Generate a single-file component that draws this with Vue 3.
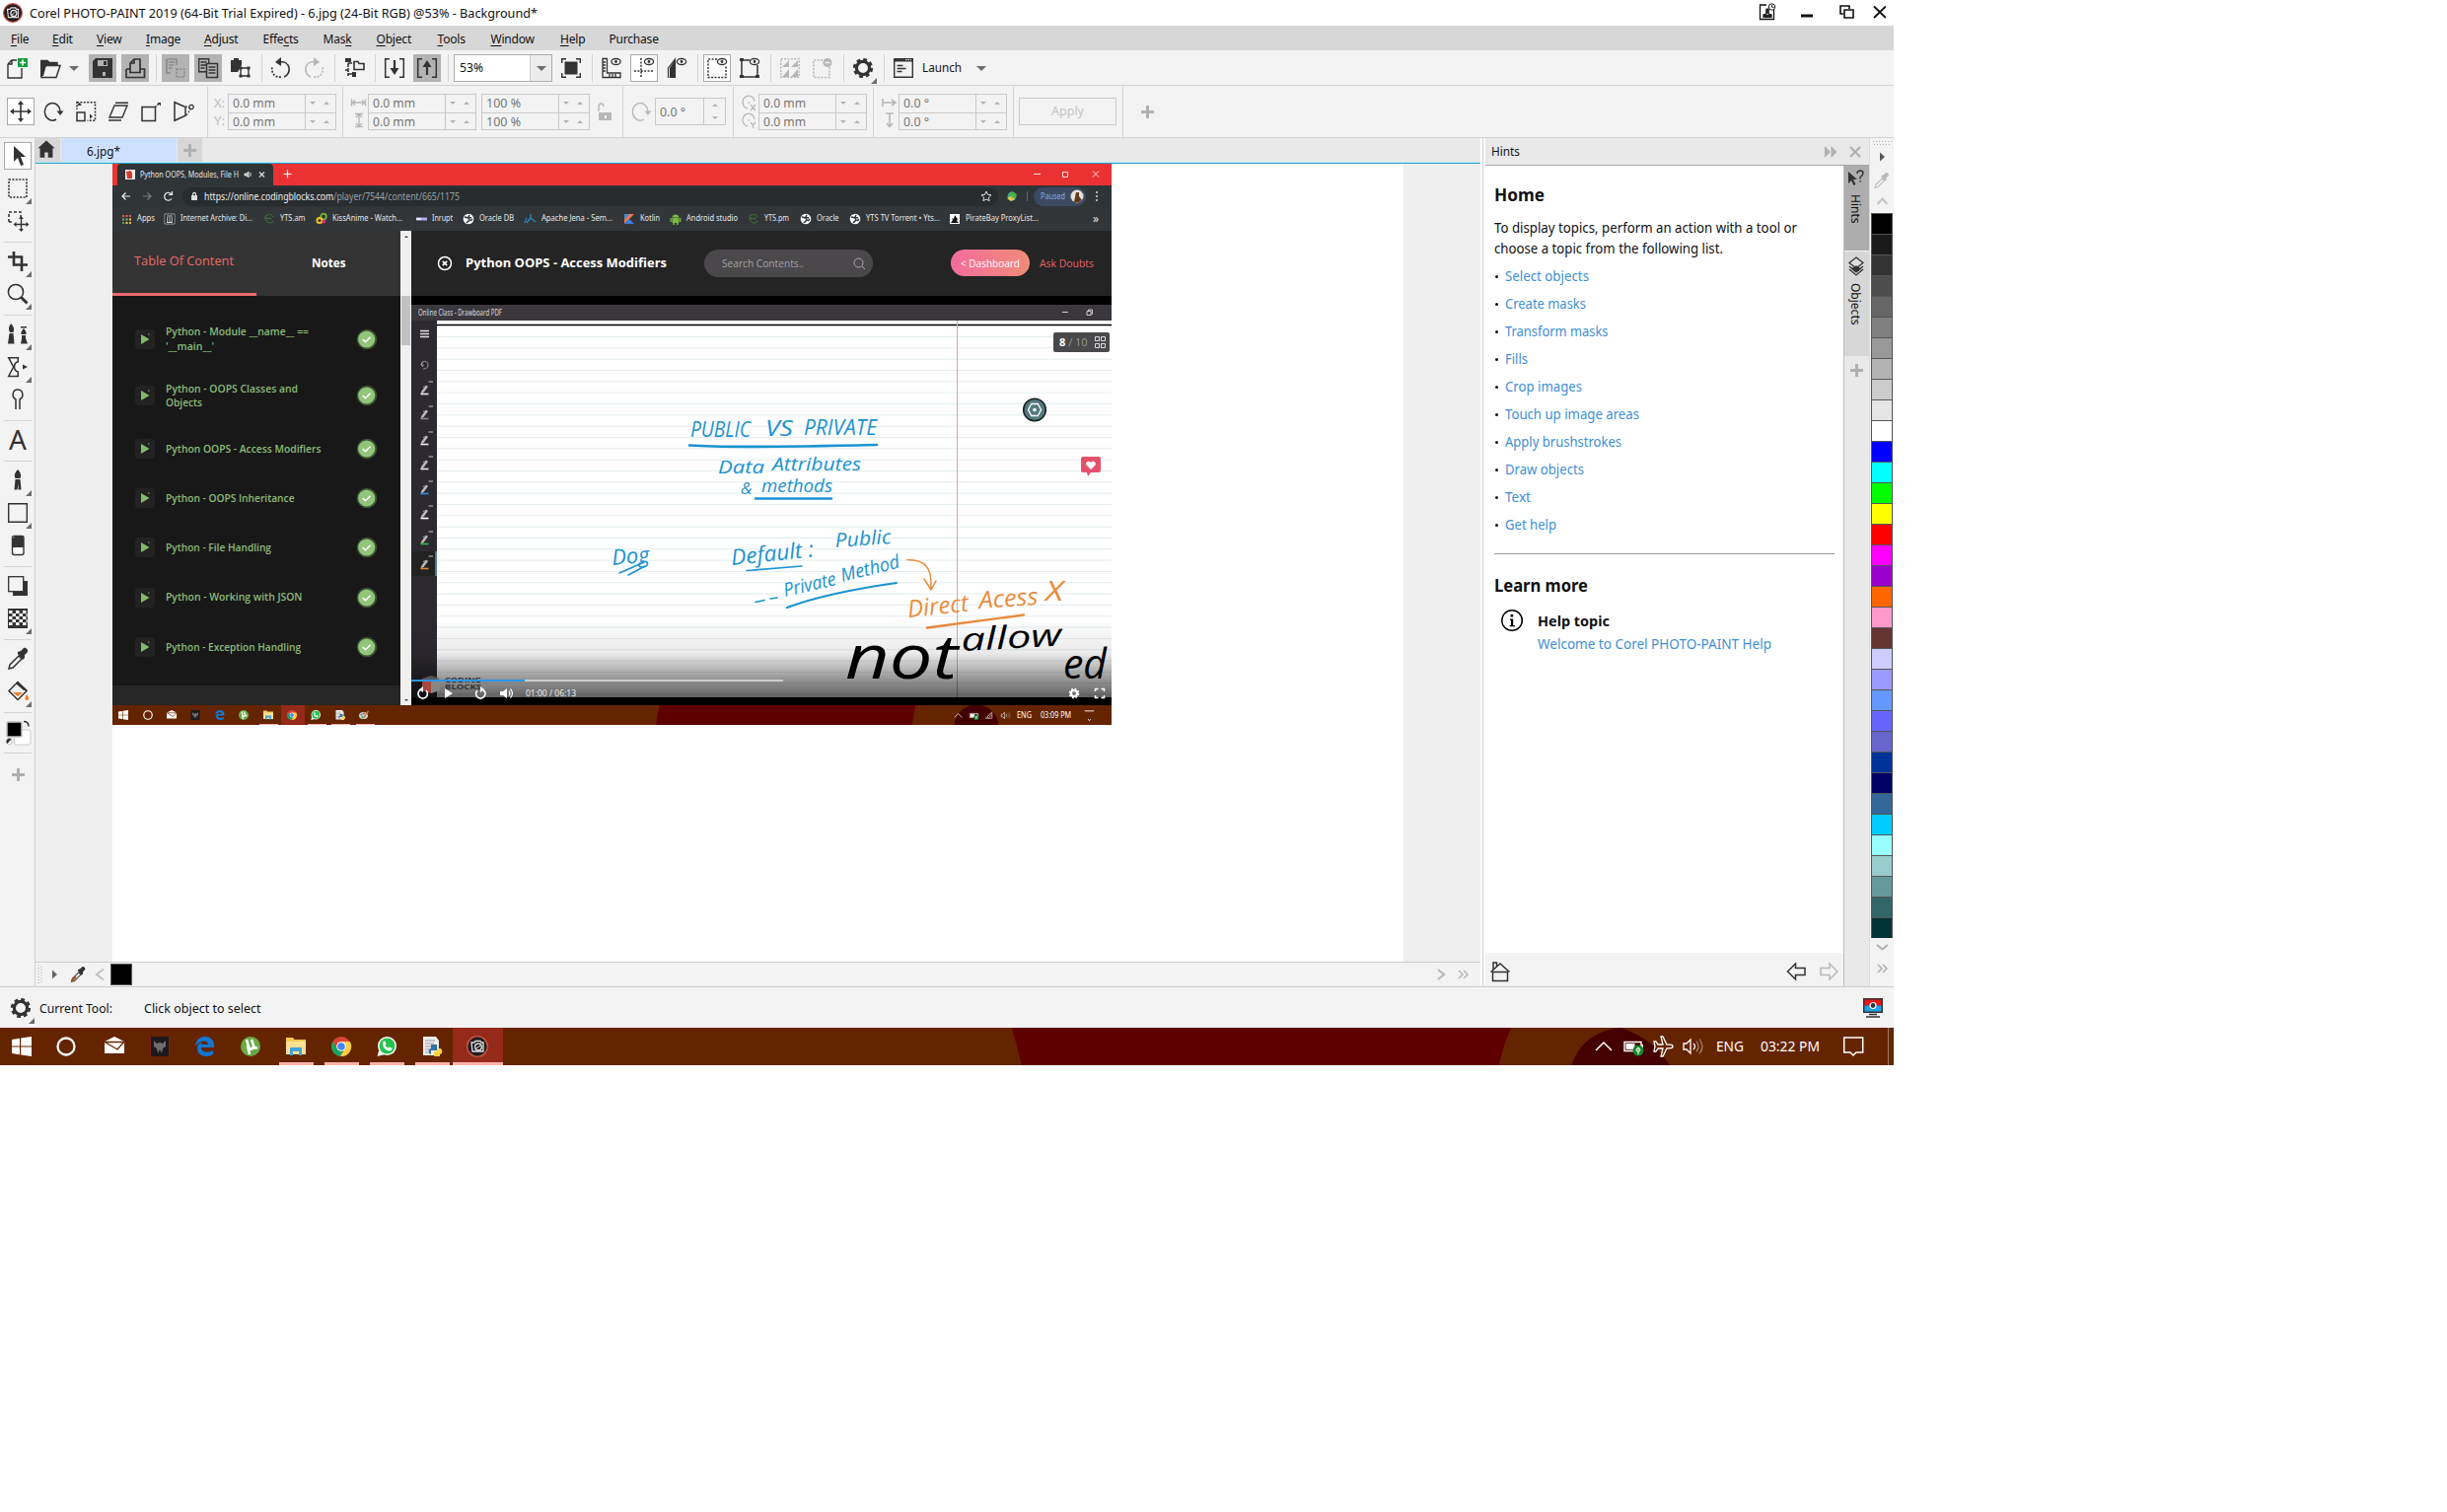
<script setup>
import { h } from 'vue'

// Single line of text set to an exact width
const T = (p) =>
  h('svg', { class: 'fit', style: { width: p.w + 'px' } }, [
    h('text', { x: 0, y: '1.05em', textLength: p.w, lengthAdjust: 'spacingAndGlyphs' }, p.t),
  ])
T.props = ['t', 'w']

const K = '#333'
const G = '#b8b8b8'
const s = (d, c = K, w = 1.4, x = '') => `<path d="${d}" fill="none" stroke="${c}" stroke-width="${w}" ${x}/>`
const f = (d, c = K) => `<path d="${d}" fill="${c}"/>`
const dot = 'stroke-dasharray="2 1.4"'
const eye = (x, y) => `<ellipse cx="${x}" cy="${y}" rx="4.6" ry="3" fill="#fff" stroke="#333" stroke-width="1.3"/><circle cx="${x}" cy="${y}" r="1.4" fill="#333"/>`
const tri = f('M28 24v6h-6z', '#6d6d6d')
const gear = (c = K) => `<circle cx="14" cy="14" r="6.6" fill="none" stroke="${c}" stroke-width="3.2"/><circle cx="14" cy="14" r="8.8" fill="none" stroke="${c}" stroke-width="2.6" stroke-dasharray="3.8 3.11"/>`
const dropper = (c, tip) => s('M5 24l1-4 9-9 3 3-9 9z', c, 1.5) + f('M14 9l5 6 2-2 0-3 3-3c1-2-2-5-4-4l-3 3-3 1z', c) + (tip ? f('M5 24l1-4 4-4 2 2-4 5z', tip) : '')
const icons = {
  new: s('M4 10v14h14V14M4 10l4-4h5M4 10h4V6', K, 1.4) + f('M14 4h10v9H14z', '#159a3c') + s('M19 5.5v6M16 8.5h6', '#fff', 1.5),
  open: f('M4 6h7l2 2h8v3H10L7 22H4z') + s('M4.7 22.5L9 11.5h15l-4 12H5z', K, 1.5) + s('M4.7 23V6.5H11l2 2h8v3', K, 1.4),
  save: f('M7 4h17v20H4V7z') + f('M9 6h10v6H9z', '#b3b3b3') + f('M15 7h3v4h-3z') + f('M14 18h3v4h-3z', '#b3b3b3'),
  print: s('M9 18V9l4-4h6v13M9 9h4V5M5 15v8.5h18.5V15h-4M5 15h4M8 18.5h12', K, 1.7),
  cut: s('M5 5h10v6M5 5v14h4M7 8h6M7 11h5M7 14h3', '#8b8b8b', 1.7) + s('M15 15h8v8h-8z', '#8b8b8b', 1.6, dot),
  copy: s('M4.7 4.7h10v13h-10zM6.5 8h6M6.5 11h6M6.5 14h4', K, 1.4) + '<rect x="12.5" y="9.5" width="11" height="14" fill="#b3b3b3" stroke="#333" stroke-width="1.5"/>' + s('M14.5 13h7M14.5 16h7M14.5 19h7', K, 1.4),
  paste: f('M4 6h3V4h5v2h3v5l-4 7H4z') + s('M14 14h8v8h-8z', K, 1.4) + f('M12.5 12.5h3v3h-3zM20.5 12.5h3v3h-3zM12.5 20.5h3v3h-3zM20.5 20.5h3v3h-3z'),
  undo: s('M12 8c12-2 13 12 5 15', K, 1.6) + s('M14 23C6 24 4 17 5 13', K, 1.6, dot) + f('M8 8l6-5v9z'),
  redo: s('M16 8C4 6 3 20 11 23', G, 1.6) + s('M14 23c8 1 10-6 9-10', G, 1.6, dot) + f('M20 8l-6-5v9z', G),
  tree: s('M8 4v18M8 9h6M8 20h5', K, 1.6, 'stroke-dasharray="4 1"') + s('M14 7.5h4l1 2h5v6H14z', K, 1.6) + f('M5 4h6v4H5zM12 18h4v5h-4z') + s('M5 16h3', K, 1.6),
  imp: s('M9 4.7H4.7v18.6H9M19 4.7h4.3v18.6H19', K, 1.5) + s('M14 6v10', K, 2.2) + f('M9.5 14h9L14 21z'),
  exp: s('M9 4.7H4.7v18.6H9M19 4.7h4.3v18.6H19', K, 1.5) + s('M14 11v10', K, 2.2) + f('M9.5 13h9L14 6z'),
  full: f('M7.5 7.5h13v13h-13z') + s('M4.7 9V4.7H9M19 4.7h4.3V9M23.3 19v4.3H19M9 23.3H4.7V19', K, 1.4),
  ruler: s('M5 4.5h4.5V19H23v4.5H5zM5 8h3M5 11h3M5 14h3M5 17h3M12 20v3M15 20v3M18 20v3', K, 1.3) + eye(18.5, 7.5),
  grid: s('M11 4v20M4 17h20', K, 1.5, dot) + eye(19, 7.5),
  guide: f('M7 24V14l5-8v18z') + s('M5.5 24V14l7-9v19', K, 1.2) + eye(19, 7.5),
  marq: s('M14 5H5v18.5h18V12', K, 1.5, dot) + eye(19, 7.5),
  objm: s('M14 6H6v17h16V11', K, 1.5) + f('M4 4h4v3H4zM4 21h4v3H4zM20 21h4v3h-4z') + eye(19, 7.5),
  inv: s('M4.7 4.7h18.6v18.6H4.7z', G, 1.5, dot) + f('M13 6v7H6zM22 6v7h-7zM13 15v8H6zM22 15v8h-7z', G),
  clr: s('M14 6H5v17.5h16V13', G, 1.5, dot) + `<circle cx="19" cy="8.5" r="4.5" fill="${G}"/>` + s('M16.5 8.5h5', '#f3f3f3', 1.4),
  gear: gear() + tri,
  launch: s('M4.7 4.7h18.6v18.6H4.7z', K, 1.4) + f('M4 4h20v3.5H4z') + s('M16 5.7h6', '#fff', 1, 'stroke-dasharray="1.5 1"') + s('M7.5 11.5h6M7.5 14.5h9M7.5 17.5h5', K, 1.3),
  move: s('M14 5v18M5 14h18', K, 1.6) + f('M14 3l3 4h-6zM14 25l3-4h-6zM3 14l4-3v6zM25 14l-4-3v6z'),
  rot: s('M21 14A7.8 8.8 0 1 0 17 22', K, 1.5) + f('M17.5 13.5h7L21 18z'),
  scale: s('M5 4.7h18.5v18.6h-8', K, 1.5, dot) + s('M5 4v8', K, 1.5, dot) + s('M5 15h8v8.5H5z', K, 1.5) + f('M5 8h5L7.5 5zM18 16.5v5l3-2.5z'),
  skew: s('M10 8h13l-5 12H5zM11 5.3h13M4 23h13', K, 1.4),
  dist: s('M5 9.5h13.5v14H5z', K, 1.5) + s('M18 10l4-4', K, 1.5, dot) + f('M20.5 5h3.5v3.5z'),
  persp: s('M5 4.7v18.6l11-5V9.5z', K, 1.5) + s('M16 9l6 2M17 18l4-6', K, 1.2, dot) + '<circle cx="22" cy="9.5" r="2.2" fill="none" stroke="#333" stroke-width="1.2"/>',
  pick: f('M10 4v16l4-4 3 8 3-1-3-8h5z'),
  mask: s('M5 5h18v18H5z', K, 1.6, dot) + tri,
  mmove: s('M5 15V5h12v5M5 15h4', K, 1.6, 'stroke-dasharray="3 2"') + s('M17.5 12v11M12 17.5h11', K, 1.4) + f('M17.5 9l2.5 3h-5zM17.5 25l2.5-3h-5zM9.5 17.5l3-2.5v5zM25.5 17.5l-3-2.5v5z'),
  crop: s('M10 4v13.5h14M4 9.5h14V24', K, 2.6) + tri,
  zoom: '<circle cx="12" cy="12" r="7.6" fill="none" stroke="#333" stroke-width="1.5"/>' + s('M17.5 17.5l6 6', K, 3) + tri,
  touch: f('M7 3c3 3 4 6 2.5 9H6C4 9 5 6 7 3zM5.5 13h4l1 10.5H4zM17 6h6v1.5h-6zM20 8c2 2 3 4 2.5 6h-5C17 12 18 10 20 8zM18 15h4v3l2 5.5h-7l1-5z') + tri,
  fx: s('M4.7 4.7h9.6v4c-5 1-5 9 0 10.3v4.5H4.7l5-9.5z', K, 1.5) + f('M19 11.5l5 2.5-5 2.5z') + tri,
  liq: s('M12 24V14c-5-3-3-10 2-10s7 7 2 10v10', K, 1.5),
  brush: f('M14 3c3 3 4 6 2.5 9h-5C10 9 11 6 14 3zM11.5 13h5l1 10.5h-3v-6l-1 6h-3z') + tri,
  rect: s('M4.7 4.7h18.6v18.6H4.7z', K, 1.4) + tri,
  erase: '<rect x="8.5" y="4.5" width="11.5" height="19" rx="2" fill="#fff" stroke="#333" stroke-width="1.4"/>' + f('M8 16V8l4-4h8v12z'),
  shad: f('M9 9h15v15H9z') + '<rect x="4.7" y="4.7" width="15" height="15" fill="#f3f3f3" stroke="#333" stroke-width="1.3"/>',
  check: f('M4 4h20v20H4z') + s('M5 7.5h18M5 13.5h18M5 19.5h18', '#fff', 2.8, 'stroke-dasharray="3.5 3.5"') + s('M8.5 10.5h15M8.5 16.5h15', '#fff', 2.8, 'stroke-dasharray="3.5 3.5"') + tri,
  drop: dropper(K),
  bucket: s('M5 13.5l9-9 9 9-9 9z', K, 1.5) + f('M14 4l10 9h-4l-8-7z') + f('M9 15h10l-5 4z', '#f47b20') + f('M23 17c3 4 2 6 0 6s-2-3 0-6z', '#f47b20') + tri,
  cols: '<rect x="10.5" y="12" width="16.5" height="15" rx="2" fill="#fff" stroke="#ccc"/><rect x="3" y="4" width="15" height="15" rx="1" fill="#000" stroke="#c4c4c4" stroke-width="1.5"/>' + s('M20 3.5c4 0 5 2 5 5', K, 1.5) + '<circle cx="5.5" cy="24" r="2.8" fill="#fff" stroke="#999" stroke-width=".6"/>' + f('M3.5 26l4-4.5a2.8 2.8 0 0 0-4 4.5z'),
  lock: s('M8 14V9c0-4 5-4 5 0', G, 1.5) + f('M8 15h13v8H8z', G) + f('M14 18h2v3h-2z', '#f3f3f3'),
  rotg: s('M21 14A7.8 8.8 0 1 0 17 22', G, 1.4) + f('M17.5 13.5h7L21 18z', G),
  home: f('M14 3l10 9h-2.5v11h-5.500v-6h-4v6H6.500V12H4z'),
  win: f('M4 7l8-1.2V13.4H4zM13.2 5.6L24 4v9.4H13.2zM4 14.6h8v7.6L4 21zM13.2 14.6H24V24l-10.8-1.6z', '#fff'),
  ring: '<ellipse cx="14" cy="14" rx="8.5" ry="8.5" fill="none" stroke="#fff" stroke-width="2.3"/>',
  mail: f('M4 9l10-5 10 5v12H4z', '#fff') + s('M4 9.5h20M5 10l12 7 7-8', '#652400', 1.3),
  pred: f('M4 4h20v20H4z', '#1d1a1b') + s('M4.5 4v20M23.5 4v20', '#7d1d24', 1) + f('M8 8l3 3 3-1 3 1 3-3v6l-3 2-1 5-2-4-2 4-1-5-3-2z', '#6d6d6d'),
  edge: f('M4 14C5 6 10 4 14 4c6 0 9 4 9 9v2H10c0 5 7 6 12 3v4c-6 4-16 2-16-6 0-4 3-6 5-6.5-1 1-1 2-1 2.5h7c0-5-8-5-13 2z', '#0f78d4'),
  ut: '<circle cx="14" cy="14" r="10" fill="#68ab45"/>' + s('M10 7l2 7c1 4 5 3 5-1l-2-6M17 13c1 3 2 3 4 2M11 13l2 9', '#fff', 2.6),
  folder: f('M4 5h7l1.5 2H24v15H4z', '#f5ca56') + f('M4 9h20v13H4z', '#fde192') + f('M8 23v-8h12v8h-3v-4h-6v4z', '#41a5d8'),
  chrome: '<circle cx="14" cy="14" r="10" fill="#dc4437"/>' + f('M5.3 9A10 10 0 0 0 13 24l5-8-4 2-4-2z', '#1aa260') + f('M14 9h8.8A10 10 0 0 1 13 24l5-8z', '#ffcd41') + '<circle cx="14" cy="14" r="4.8" fill="#fff"/><circle cx="14" cy="14" r="3.8" fill="#4587f2"/>',
  wa: '<circle cx="14.5" cy="13.5" r="9.5" fill="#fff"/>' + f('M4.5 24l2-7 6 5z', '#fff') + '<circle cx="14.5" cy="13.5" r="8" fill="#25c351"/>' + f('M10.5 9l2-.5 1 3-1 1c1 2 2 2.5 3 3l1.2-1 2.8 1.2c0 3-3 3.5-5.5 2C11 16 9 12 10.5 9z', '#fff'),
  py: f('M5 4h13l3 4v15H5z', '#eee') + s('M7 8h10M7 11h9M7 14h6M7 17h5M7 20h4', '#999', 1) + f('M13 12h6v6h-6v4c-3 0-3-6 0-6z', '#3672a4') + f('M19 16h3c3 0 3 6 0 6v2h-6v-5h3z', '#ffd243'),
  corel: '<circle cx="14" cy="14" r="10.3" fill="#201c20" stroke="#cf5a43" stroke-width="1.3"/>' + s('M8 10h3l1-1.5h5l1 1.5h2v9H9z', '#ddd', 1.3) + '<circle cx="15" cy="14.5" r="3.3" fill="#201c20" stroke="#eee" stroke-width="1.3"/>' + s('M13 16l4-3', '#eee', 1),
  paint: '<ellipse cx="13" cy="15" rx="9" ry="7" fill="#cfd6dc"/><circle cx="9" cy="13" r="2" fill="#3b82c4"/><circle cx="14" cy="11" r="2" fill="#d94b3d"/><circle cx="11" cy="18" r="2" fill="#4ba64b"/>' + s('M13 20L23 6', '#b7834f', 2.6),
  tUp: s('M6 18l8-8 8 8', '#fff', 1.5),
  tBat: s('M5 9.5h17v9H5z', '#fff', 1.4) + f('M6.5 11h9v6h-9zM22 12h2v4h-2z', '#fff') + '<circle cx="19" cy="18" r="5.5" fill="#14882c"/>' + s('M19 22v-6M17 17c0 3 4 3 4 0l-2-2z', '#fff', 1),
  tPlane: s('M24 14c0-1.5-1-1.8-3-1.8h-3L14 4h-2l2 8H9l-2-3H5l1 5-1 5h2l2-3h5l-2 8h2l4-8.2h3c2 0 3-.3 3-1.8z', '#fff', 1.3),
  tVol: s('M5 11h3l4-4v14l-4-4H5z', '#fff', 1.3) + s('M15 11c2 2 2 4 0 6', '#fff', 1.2) + s('M18 8.5c3 4 3 7 0 11M21 6.5c4 5 4 10 0 15', '#a58672', 1.2),
  tNote: s('M4.7 5h19v15H17l-3 3-3-3H4.7z', '#fff', 1.5),
  tWifi: s('M5 20L19 6v14zM9 20c0-6 5-9 9-10M13 20c0-4 3-6 6-6', '#d8c8be', 1.5),
}

const menus = [
  ['F', 'ile', 18.5, 42], ['E', 'dit', 22, 45], ['V', 'iew', 27, 50], ['I', 'mage', 36, 59], ['A', 'djust', 36, 59.5], ['Effe', 'ts', 38, 61, 'c'],
  ['Mas', '', 31, 54, 'k'], ['O', 'bject', 38, 62], ['T', 'ools', 31, 54], ['W', 'indow', 47, 70.5], ['H', 'elp', 27, 49.5], ['Purchase', '', 52, 60, ''],
]
const bar1a = [
  ['new'], ['open'], ['|v'], ['save', 'on'], ['print', 'on'], ['|'], ['cut', 'on'], ['copy', 'on'], ['paste'], ['|'], ['undo'], ['redo'], ['|'],
  ['tree'], ['|'], ['imp'], ['exp', 'on'], ['|'],
]
const bar1b = [
  ['full'], ['|'], ['ruler'], ['grid', 'box'], ['guide'], ['|'], ['marq', 'box'], ['objm'], ['|'], ['inv'], ['clr'], ['|'], ['gear'], ['|'], ['launch'],
]
const modes = [['move', 'box'], ['rot'], ['scale'], ['skew'], ['dist'], ['persp']]
const tools = [
  ['pick', 'box'], ['mask'], ['mmove'], ['-'], ['crop'], ['zoom'], ['-'], ['touch'], ['fx'], ['liq'], ['-'], ['A'], ['-'], ['brush'], ['rect'], ['erase'],
  ['-'], ['shad'], ['check'], ['-'], ['drop'], ['bucket'], ['-'], ['cols'], ['-'], ['+'],
]
const palette = (
  '000 1a1a1a 333 4d4d4d 666 808080 999 b3b3b3 ccc e6e6e6 fff 00f 0ff 0f0 ff0 f00 f0f 9900cc f60 f9c 633 ccf 99f 69f 66f 66c 039 006 369 0cf 9ff 9cc 699 366 033'
).split(' ').map((c) => '#' + c)
const hints = [
  ['Select objects', 85], ['Create masks', 82], ['Transform masks', 104.5], ['Fills', 23], ['Crop images', 78], ['Touch up image areas', 136],
  ['Apply brushstrokes', 118], ['Draw objects', 80], ['Text', 26], ['Get help', 52],
]
const tasks = [
  ['win', 45], ['ring', 45], ['mail', 52], ['pred', 41], ['edge', 51], ['ut', 41], ['folder', 51, 'u'], ['chrome', 41, 'u'], ['wa', 51, 'u'], ['py', 41, 'u'], ['corel', 51, 'act'],
]
const lessons = [
  [['Python - Module __name__ ==', 145], ["'__main__'", 49]],
  [['Python - OOPS Classes and', 134], ['Objects', 37]],
  [['Python OOPS - Access Modifiers', 157.5]],
  [['Python - OOPS Inheritance', 130.5]],
  [['Python - File Handling', 107]],
  [['Python - Working with JSON', 138.5]],
  [['Python - Exception Handling', 137]],
]
const globe = '<circle cx="7" cy="7" r="5.3" fill="#fff"/><path d="M3 5l4 1 1 2-3 3M8 3l-1 2 3 1M9 9l2-2" fill="none" stroke="#2f3437" stroke-width="1.5"/>'
const yts = '<path d="M3 4c-1 7 6 9 8 5M3 4c3-2 7-2 8 1" fill="none" stroke="#3f7c35" stroke-width="1"/><path d="M4 6.5h6" stroke="#3f7c35" stroke-width="1.5" stroke-dasharray="2 1"/>'
const marks = [
  ['Apps', 18, 44, '<path d="M3 4h9M3 7.5h9M3 11h9" stroke="#e0604c" stroke-width="2" stroke-dasharray="2 1.5"/><path d="M3 7.5h5.5M3 11h2" stroke="#58a55c" stroke-width="2" stroke-dasharray="2 1.5"/><path d="M6.5 11h6M10 7.5h2" stroke="#e6b93c" stroke-width="2" stroke-dasharray="2 1.5"/>'],
  ['Internet Archive: Di...', 73, 101, '<path d="M2 2h10v10H2z" fill="#111" stroke="#bbb" stroke-width=".8"/><path d="M4 4h6M4 10.5h6M4.7 5v5M7 5v5M9.3 5v5" stroke="#ddd"/>'],
  ['YTS.am', 25.5, 53, yts],
  ['KissAnime - Watch...', 71, 101, '<circle cx="9" cy="4.5" r="2.8" fill="none" stroke="#6dbb2f" stroke-width="1.8"/><circle cx="5" cy="8.5" r="2.6" fill="none" stroke="#f0c419" stroke-width="2"/><circle cx="9.5" cy="9.5" r="2" fill="#e0218a"/>'],
  ['Inrupt', 21, 48, '<path d="M2 7h11" stroke="#b9a6f0" stroke-width="3"/><path d="M2 7h5" stroke="#e7ecff" stroke-width="2"/>'],
  ['Oracle DB', 35, 63, globe],
  ['Apache Jena - Sem...', 72, 100, '<path d="M7 2v4l-4 5M7 6l5 4M3 6l-2 5" fill="none" stroke="#2687b8" stroke-width="1.3"/>'],
  ['Kotlin', 20, 47, '<path d="M2 2h5l-5 6z" fill="#3d8fe0"/><path d="M7 2h5L2 12V8z" fill="#ec7b4e"/><path d="M2 12l5-5 5 5z" fill="#3f7fe0"/>'],
  ['Android studio', 52, 79, '<path d="M3.5 6h7v5h-7zM3.5 5.5c0-4 7-4 7 0zM1.5 6h1.3v4H1.5zM11.2 6h1.3v4h-1.3zM4.5 11h1.5v2H4.5zM8 11h1.5v2H8z" fill="#79b83f"/>'],
  ['YTS.pm', 25, 53, yts],
  ['Oracle', 22.5, 50, globe],
  ['YTS TV Torrent • Yts...', 75, 101, globe],
  ['PirateBay ProxyList...', 74, 143, '<path d="M2 2h10v10H2z" fill="#fff"/><path d="M3 11l2-3-1-2 2 1 1-4 2 3 1 1-1 2 2 2z" fill="#111"/>'],
]
const minis = [['win', ''], ['ring', ''], ['mail', ''], ['pred', ''], ['edge', ''], ['ut', ''], ['folder', 'u'], ['chrome', 'act'], ['wa', 'u'], ['py', 'u'], ['paint', 'u']]
const pens = ['#eee', '#888', '#eee', '#eee', '#2a8fe0', '#fff', '#3cb34a', '#e2862f']
const rules = Array.from({ length: 33 }, (_, i) => 341.5 + i * 11.33)
</script>

<template>
  <div class="app">
    <header class="title">
      <svg class="logo" viewBox="2 2 24 24" v-html="icons.corel" />
      <T t="Corel PHOTO-PAINT 2019 (64-Bit Trial Expired) - 6.jpg (24-Bit RGB) @53% - Background*" :w="515" />
      <svg class="winctl" width="136" height="26" fill="none" stroke="#111">
        <path d="M15 5H8.500v14.500h14V10M12 17h8v-2l-3-1v-4h-2v4l-3 1z" stroke-width="1.300" />
        <path d="M14.500 8.500h3v5h-3zM12 15h8v3h-8z" fill="#222" stroke="none" />
        <circle cx="20.500" cy="7" r="3.200" fill="#fff" stroke-width="1" /><path d="M20.500 5v2.300h2" stroke-width=".9" />
        <path d="M50 16h12" stroke-width="3" />
        <path d="M93 14h-3V6h9v3M94 10h9v8h-9z" stroke-width="1.600" />
        <path d="M124 6.500l12 11.500M136 6.500l-12 11.500" stroke-width="1.900" />
      </svg>
    </header>

    <nav class="menu">
      <span v-for="m in menus" :key="m[0]" class="menu-item" :style="{ width: m[3] + 'px' }"
        ><span v-if="m.length > 4">{{ m[0] }}<u>{{ m[4] }}</u>{{ m[1] }}</span><span v-else><u>{{ m[0] }}</u>{{ m[1] }}</span></span>
    </nav>

    <div class="bar1">
      <template v-for="(b, i) in bar1a" :key="i">
        <i v-if="b[0] === '|'" class="sep" />
        <i v-else-if="b[0] === '|v'" class="drop"><b class="down" /></i>
        <span v-else class="cell" :class="b[1]"><svg viewBox="0 0 28 28" v-html="icons[b[0]]" /></span>
      </template>
      <div class="combo"><T t="53%" :w="24" /><i><b class="down" /></i></div>
      <template v-for="(b, i) in bar1b" :key="'b' + i">
        <i v-if="b[0] === '|'" class="sep" />
        <span v-else class="cell" :class="b[1]"><svg viewBox="0 0 28 28" v-html="icons[b[0]]" /></span>
      </template>
      <T class="launch" t="Launch" :w="40" /><b class="down" />
    </div>

    <div class="bar2">
      <span v-for="b in modes" :key="b[0]" class="cell" :class="b[1]"><svg viewBox="0 0 28 28" v-html="icons[b[0]]" /></span>
      <i class="sep s14" />
      <div class="lab"><T t="X:" :w="11" /><T t="Y:" :w="11" /></div>
      <div class="spin"><div v-for="n in 2" :key="n"><T t="0.0 mm" :w="43" /><i><b class="dn" /><b class="up" /></i></div></div>
      <i class="sep s13" />
      <svg class="g" width="19" height="36" fill="none" stroke="#b8b8b8" stroke-width="1.400"><path d="M2.500 5.500v7M16.500 5.500v7M3 9h13M6 6.500L3.500 9 6 11.500M13 6.500L15.500 9 13 11.500M6 20.500h8M6 33.500h8M10 21v12M7 24l3-3 3 3M7 30l3 3 3-3" /></svg>
      <div class="spin"><div v-for="n in 2" :key="n"><T t="0.0 mm" :w="43" /><i><b class="dn" /><b class="up" /></i></div></div>
      <div class="spin second"><div v-for="n in 2" :key="n"><T t="100 %" :w="35" /><i><b class="dn" /><b class="up" /></i></div></div>
      <span class="mid"><svg viewBox="0 0 28 28" v-html="icons.lock" /></span>
      <i class="sep" />
      <span class="mid"><svg viewBox="0 0 28 28" v-html="icons.rotg" /></span>
      <div class="angle"><T t="0.0 °" :w="26" /><i><b class="up" /><b class="dn" /></i></div>
      <i class="sep s15" />
      <svg class="g" width="18" height="36" fill="none" stroke="#b8b8b8" stroke-width="1.300"><path d="M14 8A6 6.500 0 1 0 7 15M14 26A6 6.500 0 1 0 7 33M10 11l5 6M15 11l-5 6M10 29l2.500 3 2.500-3M12.500 32v3M7.500 9h1.500M7.500 27h1.500" /></svg>
      <div class="spin"><div v-for="n in 2" :key="n"><T t="0.0 mm" :w="43" /><i><b class="dn" /><b class="up" /></i></div></div>
      <i class="sep s13" />
      <svg class="g" width="19" height="36" fill="none" stroke="#b8b8b8" stroke-width="1.600"><path d="M3 5v8M3 9h13M12 6l4 3-4 3M6 20h8M10 20v13M7 30l3 3.500 3-3.500" /></svg>
      <div class="spin"><div v-for="n in 2" :key="n"><T t="0.0 °" :w="26" /><i><b class="dn" /><b class="up" /></i></div></div>
      <i class="sep s12" />
      <div class="apply"><T t="Apply" :w="33" /></div>
      <i class="sep s13" />
      <span class="mid plus2"><i class="plus" /></span>
    </div>

    <main class="work">
      <aside class="toolbox">
        <template v-for="(b, i) in tools" :key="i">
          <i v-if="b[0] === '-'" class="hsep" />
          <span v-else-if="b[0] === 'A'" class="cell tA">A</span>
          <span v-else-if="b[0] === '+'" class="cell tp"><i class="plus" /></span>
          <span v-else class="cell" :class="b[1]"><svg viewBox="0 0 28 28" v-html="icons[b[0]]" /></span>
        </template>
      </aside>

      <section class="editor">
        <div class="tabs">
          <span class="tab-home"><svg viewBox="0 0 28 28" v-html="icons.home" /></span>
          <span class="tab-doc"><T t="6.jpg*" :w="34" /></span>
          <span class="tab-new"><i class="plus" /></span>
        </div>

        <div class="viewport">
          <div class="doc">
            <div class="shot">
              <div class="c-tabs">
                <div class="c-tab">
                  <svg width="12" height="12"><path d="M1 1h10v10H1z" fill="#eee" /><path d="M2 3l4-1 2 2v6H3z" fill="#d8392f" /></svg>
                  <T t="Python OOPS, Modules, File H" :w="100" />
                  <svg width="34" height="12" fill="none" stroke="#dcdcdc"><path d="M2 5h2l2-2v6L4 7H2zM8 4v4" fill="#bbb" /><path d="M17 3.500l5 5M22 3.500l-5 5" stroke-width="1.200" /></svg>
                </div>
                <svg width="16" height="16" stroke="#fff" stroke-width="1.200"><path d="M8.500 3.500v8M4.500 7.500h8" /></svg>
                <svg class="c-ctl" width="80" height="16" fill="none" stroke="#ffe0e0"><path d="M4 7.500h7M33.500 5.500h5v5h-5zM64 4.500l6 6M70 4.500l-6 6" /></svg>
              </div>
              <div class="c-addr">
                <svg width="70" height="18" fill="none" stroke="#eee" stroke-width="1.200"><path d="M18 9h-8M13.500 5.500L10 9l3.500 3.500" /><path d="M31 9h8M35.500 5.500L39 9l-3.500 3.500" stroke="#7d8082" /><path d="M60 7a4 4 0 1 0 0 4.500M60.500 4v3.500H57" /></svg>
                <div class="pill">
                  <svg width="22" height="18"><path d="M9 8h6v5H9zM10 8V6q2-2.500 4 0v2h-1V6.500h-2V8z" fill="#ddd" /></svg>
                  <svg class="fit url"><text x="0" y="1.05em" textLength="259" lengthAdjust="spacingAndGlyphs"><tspan class="host">https://online.codingblocks.com</tspan><tspan>/player/7544/content/665/1175</tspan></text></svg>
                  <svg class="star" width="14" height="14"><path d="M7 2l1.500 3.300 3.500.4-2.600 2.400.7 3.500L7 10l-3.100 1.600.7-3.500L2 5.700l3.500-.4z" fill="none" stroke="#ddd" /></svg>
                </div>
                <svg width="36" height="18"><circle cx="14" cy="9" r="4.500" fill="#3aa0d8" /><path d="M10 8l4-4 5 3-3 5z" fill="#4bb33d" /><path d="M9 11l4-2 4 3-4 2z" fill="#e7c93c" /><path d="M29.500 4v10" stroke="#666" /></svg>
                <div class="paused"><T t="Paused" :w="25" /><svg width="14" height="14"><circle cx="7" cy="7" r="6.500" fill="#e8e0d8" /><path d="M6 3h3v4l3 4-3 2H4l1-5z" fill="#5b3a22" /></svg></div>
                <svg width="16" height="14" fill="#ddd"><circle cx="11" cy="3" r="1" /><circle cx="11" cy="7" r="1" /><circle cx="11" cy="11" r="1" /></svg>
              </div>
              <div class="c-marks">
                <div v-for="(m, i) in marks" :key="i" class="mark" :style="{ width: m[2] + 'px' }"><svg width="14" height="14" v-html="m[3]" /><T :t="m[0]" :w="m[1]" /></div>
                <span>»</span>
              </div>
              <div class="c-page">
                <div class="side">
                  <div class="side-tabs"><div class="toc"><T t="Table Of Content" :w="101" /></div><div class="notes"><T t="Notes" :w="34.500" /></div></div>
                  <div class="lessons">
                    <div v-for="(l, i) in lessons" :key="i" class="lesson" :class="{ two: l.length > 1 }">
                      <span class="tile"><svg width="20" height="20"><path d="M6 5l8.500 5L6 15z" fill="#84b96c" /><path d="M13 5h1.500" stroke="#84b96c" /></svg></span>
                      <div class="ltext"><T v-for="p in l" :key="p[0]" :t="p[0]" :w="p[1]" /></div>
                      <svg width="22" height="22"><circle cx="11" cy="11" r="10.300" fill="#3b5230" /><circle cx="10.700" cy="11" r="8.600" fill="#92c47b" /><path d="M6.700 11l2.800 2.800 5-5" fill="none" stroke="#fff" stroke-width="1.500" /></svg>
                    </div>
                  </div>
                  <div class="side-foot" />
                </div>
                <div class="scroll"><i /><b /><em /></div>
                <div class="player">
                  <div class="p-head">
                    <svg class="px" width="16" height="16" fill="none" stroke="#fff"><circle cx="8" cy="8" r="6.500" stroke-width="1.500" /><path d="M5.800 5.800l4.400 4.400M10.200 5.800l-4.400 4.400" stroke-width="1.700" /></svg>
                    <T class="p-title" t="Python OOPS - Access Modifiers" :w="204" />
                    <div class="search"><T t="Search Contents.." :w="83" /><svg width="14" height="14" fill="none" stroke="#aaa"><circle cx="6.500" cy="6.500" r="4.500" /><path d="M10 10l3 3" /></svg></div>
                    <div class="dash"><T t="&lt; Dashboard" :w="60" /></div>
                    <T class="ask" t="Ask Doubts" :w="55" />
                  </div>
                  <div class="d-title"><T t="Online Class - Drawboard PDF" :w="85" /><svg width="60" height="16" fill="none" stroke="#ccc"><path d="M10 7.500h6M35 6.500h4v4h-4zM36.500 6V5h4v4.500h-1" /></svg></div>
                  <div class="board">
                    <div class="pens">
                      <svg width="26" height="57" fill="none" stroke="#ddd"><path d="M9 10.500h9M9 13.500h9M9 16.500h9" stroke-width="1.300" /><path d="M10 45h3M10 45c0-5 7-5 7 0 0 4-4 4-5 4M12 42l-2 3 2 2" stroke="#999" /></svg>
                      <div v-for="(c, i) in pens" :key="i" class="pen" :class="{ cur: i === 7 }"><svg width="26" height="25"><path d="M9.500 17.500l1-3 4.500-6 2 1.500-4.500 6z" fill="#bbb" /><path d="M12 10.500l3-1" stroke="#999" stroke-width="1.200" /><path d="M9.500 17.500h8" :stroke="c" stroke-width="1.600" /><path d="M17.500 5h4.500" stroke="#777" stroke-width="2" /></svg></div>
                    </div>
                    <svg class="sheet" viewBox="443 325 684 382" width="684" height="382">
                      <rect x="443" y="325" width="684" height="382" fill="#fff" />
                      <path v-for="y in rules" :key="y" :d="`M443 ${y}h684`" stroke="#e3ecef" />
                      <path d="M443 329.500h684" stroke="#000" stroke-width="1.300" />
                      <path d="M970.500 325v382" stroke="#d3a9a9" />
                      <g class="ink" fill="#1b93cf">
                        <text x="700" y="443" font-size="22" textLength="61" lengthAdjust="spacingAndGlyphs">PUBLIC</text>
                        <text x="776" y="442" font-size="21" textLength="28" lengthAdjust="spacingAndGlyphs">VS</text>
                        <text x="815" y="441" font-size="21" textLength="74" lengthAdjust="spacingAndGlyphs">PRIVATE</text>
                        <text x="728" y="480" font-size="18" textLength="47" lengthAdjust="spacingAndGlyphs">Data</text>
                        <text x="783" y="477" font-size="18" textLength="90" lengthAdjust="spacingAndGlyphs">Attributes</text>
                        <text x="751" y="501" font-size="17" textLength="10">&amp;</text>
                        <text x="772" y="499" font-size="19" textLength="72" lengthAdjust="spacingAndGlyphs">methods</text>
                        <text x="621" y="573" font-size="22" textLength="38" lengthAdjust="spacingAndGlyphs" transform="rotate(-5 621 573)">Dog</text>
                        <text x="742" y="573" font-size="22" textLength="84" lengthAdjust="spacingAndGlyphs" transform="rotate(-6 742 573)">Default :</text>
                        <text x="847" y="555" font-size="20" textLength="57" lengthAdjust="spacingAndGlyphs" transform="rotate(-4 847 555)">Public</text>
                        <text x="796" y="605" font-size="19" textLength="54" lengthAdjust="spacingAndGlyphs" transform="rotate(-13 796 605)">Private</text>
                        <text x="854" y="590" font-size="19" textLength="61" lengthAdjust="spacingAndGlyphs" transform="rotate(-14 854 590)">Method</text>
                      </g>
                      <g fill="none" stroke="#1b93cf" stroke-linecap="round" stroke-width="1.600">
                        <path d="M699 451.500q40 3 190-.500M766 505.500h77" stroke-width="2.600" />
                        <path d="M628 581l25-11M637 583l17-9M757 578.500l56-4.500M766 610.500l9-2M781 607l7-1" />
                        <path d="M798 616q40-15 111-25" stroke-width="2.200" />
                      </g>
                      <g fill="none" stroke="#ea8c3c" stroke-width="1.500" stroke-linecap="round">
                        <path d="M920 567.500c18 0 25 8 24 28M937 587l7 11 5-9" />
                        <path d="M940 636.500l98-13" stroke-width="2.400" />
                      </g>
                      <g class="ink" fill="#ea8c3c">
                        <text x="921" y="626" font-size="24" textLength="62" lengthAdjust="spacingAndGlyphs" transform="rotate(-6 921 626)">Direct</text>
                        <text x="993" y="617" font-size="24" textLength="60" lengthAdjust="spacingAndGlyphs" transform="rotate(-4 993 617)">Acess</text>
                        <text x="1060" y="609" font-size="28" textLength="18" lengthAdjust="spacingAndGlyphs">X</text>
                      </g>
                      <circle cx="1049" cy="415.500" r="11.300" fill="#55797d" stroke="#152022" stroke-width="1.500" />
                      <path d="M1042.500 415.500l3.200-6h6.600l3.200 6-3.200 6h-6.600z" fill="none" stroke="#fff" stroke-width="1.300" /><circle cx="1049" cy="415.500" r="1.800" fill="#fff" />
                      <path d="M1098 463h16q2 0 2 2v12q0 2-2 2h-8l-3 4-1-4h-4q-2 0-2-2v-12q0-2 2-2z" fill="#e5506a" />
                      <path d="M1106 476l-4.500-4.500c-1.500-3 2.500-5.500 4.500-2.500 2-3 6-.500 4.500 2.500z" fill="#fff" />
                      <rect x="1068" y="337" width="57" height="20" rx="2" fill="#49484a" />
                      <text class="pg" x="1074" y="351" font-size="11"><tspan fill="#fff" font-weight="700">8</tspan><tspan fill="#999"> / 10</tspan></text>
                      <path d="M1110.500 341.500h4v4h-4zM1116.500 341.500h4v4h-4zM1110.500 348.500h4v4h-4zM1116.500 348.500h4v4h-4z" fill="none" stroke="#ddd" />
                      <g class="ink" fill="#000">
                        <text x="857" y="688" font-size="62" textLength="114" lengthAdjust="spacingAndGlyphs">not</text>
                        <text x="975" y="660" font-size="32" textLength="102" lengthAdjust="spacingAndGlyphs" transform="rotate(-3 975 660)">allow</text>
                        <text x="1078" y="688" font-size="42" textLength="44" lengthAdjust="spacingAndGlyphs">ed</text>
                      </g>
                    </svg>
                    <div class="shade">
                      <div class="cb"><svg width="24" height="20"><path d="M3 4l9-3 9 3-9 3z" fill="#555" /><path d="M3 4l9 3v12l-9-3z" fill="#a8473c" /><path d="M12 7l9-3v12l-9 3z" fill="#8a8585" /></svg><div><T t="CODING" :w="37" /><T t="BLOCKS" :w="37" /></div></div>
                      <div class="prog"><i /><b /></div>
                      <div class="ctl">
                        <svg width="114" height="16" fill="none" stroke="#fff" stroke-width="1.600"><path d="M8 4a4.700 4.700 0 1 0 5 1" /><path d="M10 1v6L6 4z" fill="#fff" stroke="none" /><path d="M32 3l8 5-8 5z" fill="#fff" stroke="none" /><path d="M70 4a4.700 4.700 0 1 1-5 1" /><path d="M68 1v6l4-3z" fill="#fff" stroke="none" /><path d="M88 6h3l4-3v10l-4-3h-3z" fill="#fff" stroke="none" /><path d="M97 5.500q2 2.500 0 5M98.500 3.500q4 4.500 0 9" stroke-width="1.200" /></svg>
                        <T t="01:00 / 06:13" :w="51" />
                        <svg class="r" width="50" height="16" fill="none" stroke="#fff"><circle cx="12" cy="8" r="3" stroke-width="2.200" /><circle cx="12" cy="8" r="4.600" stroke-width="1.400" stroke-dasharray="2 1.600" /><path d="M33.500 6V3.500h3M39.500 3.500h3V6M42.500 10v2.500h-3M36.500 12.500h-3V10" stroke-width="1.500" /></svg>
                      </div>
                    </div>
                  </div>
                </div>
              </div>
              <div class="c-task">
                <span v-for="m in minis" :key="m[0]" :class="m[1]"><svg viewBox="0 0 28 28" v-html="icons[m[0]]" /></span>
                <div class="c-tray">
                  <svg viewBox="0 0 28 28" v-html="icons.tUp" /><svg viewBox="0 0 28 28" v-html="icons.tBat" /><svg viewBox="0 0 28 28" v-html="icons.tWifi" /><svg viewBox="0 0 28 28" v-html="icons.tVol" />
                  <T class="en" t="ENG" :w="15" /><T class="clk" t="03:09 PM" :w="31" /><svg class="nt" viewBox="0 0 28 28"><path d="M4 4h20M11 22l3 3 3-3" fill="none" stroke="#fff" stroke-width="2" /></svg>
                </div>
              </div>
            </div>
          </div>
        </div>

        <div class="docpal">
          <svg width="76" height="24"><path d="M3 2v20M6 3.500v18" stroke="#aaa" stroke-dasharray="1 2" /><path d="M17 7.500v9l5-4.500z" fill="#666" /><g transform="translate(33 2) scale(.72)" v-html="dropper(K, '#b5541f')" /><path d="M69 6.500L62 12l7 5.500" fill="none" stroke="#c4c4c4" stroke-width="2.200" /></svg>
          <i class="blk" />
          <svg class="pr" width="50" height="24" fill="none" stroke="#b8b8b8" stroke-width="2.200"><path d="M8 7l6 5-6 5" /><path d="M29 8l4 4-4 4M34 8l4 4-4 4" stroke-width="1.600" /></svg>
        </div>
      </section>

      <i class="split" />

      <aside class="docker">
        <div class="d-head"><T t="Hints" :w="29" /><svg width="53" height="26"><path d="M8 7v12l6-6zM14.500 7v12l6-6z" fill="#b0b0b0" /><path d="M34 8l10 10M44 8L34 18" stroke="#b0b0b0" stroke-width="2.200" /></svg></div>
        <div class="d-body">
          <div class="hints">
            <div class="h-page">
              <T class="h1" t="Home" :w="51" />
              <T class="p" t="To display topics, perform an action with a tool or" :w="307" />
              <T class="p" t="choose a topic from the following list." :w="232" />
              <ul><li v-for="x in hints" :key="x[0]"><i /><T :t="x[0]" :w="x[1]" /></li></ul>
              <hr />
              <T class="h2" t="Learn more" :w="95" />
              <div class="topic">
                <svg width="24" height="24"><circle cx="11" cy="12" r="10.300" fill="none" stroke="#000" stroke-width="1.500" /><path d="M9 10.500h3.200V17H14v1.200H8.700V17H10v-5H9zM9.500 6h2.700v2.600H9.500z" /></svg>
                <div><T class="ht" t="Help topic" :w="73" /><T class="lk" t="Welcome to Corel PHOTO-PAINT Help" :w="237" /></div>
              </div>
            </div>
            <div class="h-foot">
              <svg width="24" height="24" fill="none" stroke="#333" stroke-width="1.500"><path d="M4.500 12v9.500h15V12M2.500 12.500L12 4l9.500 8.500M5 10V3h3.500v4M4.500 12.500h15" /></svg>
              <svg width="54" height="24" fill="none" stroke-width="1.500"><path d="M2.500 12l8-8v4.500h9.500v7h-9.500V20z" stroke="#333" /><path d="M53 12l-8-8v4.500h-9v7h9V20z" stroke="#b8b8b8" /></svg>
            </div>
          </div>
          <div class="vtabs">
            <div class="vt on"><svg width="26" height="26"><path d="M4 6v12l3-3 2.500 5 2-1L9 14h4z" fill="#333" /><path d="M13 8q0-3 3-3t3 2.500q0 2-3 4v2M16 15v1.500" fill="none" stroke="#333" stroke-width="1.400" /></svg><span>Hints</span></div>
            <div class="vt ob"><svg width="26" height="26" fill="none" stroke="#333" stroke-width="1.300"><path d="M5 15l7 6 7-6M5 12l7 6 7-6" /><path d="M12 3l7 5.500-7 5.500-7-5.500z" fill="#ddd" /><path d="M12 12l4 2.500-4 3-4-3z" fill="#333" /></svg><span>Objects</span></div>
            <i class="plus" />
          </div>
        </div>
      </aside>

      <aside class="pal">
        <svg width="25" height="76"><path d="M3 3.500h20M4 6.500h18" stroke="#aaa" stroke-dasharray="1 2" /><path d="M10 14.500v9l5-4.500z" fill="#555" /><g transform="translate(1.500 33) scale(.72)" v-html="dropper('#b8b8b8')" /><path d="M7.500 67l5-5.500 5 5.500" fill="none" stroke="#c4c4c4" stroke-width="2" /></svg>
        <div class="sw"><i v-for="c in palette" :key="c" :style="{ background: c }" /></div>
        <svg width="25" height="48" fill="none" stroke="#b0b0b0" stroke-width="2"><path d="M7 6l5.500 4.500L18 6" /><path d="M8 26l4 4-4 4M13 26l4 4-4 4" stroke-width="1.600" /></svg>
      </aside>
    </main>

    <footer class="status">
      <svg class="sg" viewBox="0 0 28 28" v-html="icons.gear" />
      <T t="Current Tool:" :w="74" /><T class="click" t="Click object to select" :w="118.500" />
      <svg class="mon" width="22" height="22"><path d="M1 1h20v15H1z" fill="#333" /><path d="M2.500 2.500h17v6h-17z" fill="#e8131b" /><path d="M2.500 8.500h17v6h-17z" fill="#1ba1e6" /><circle cx="11" cy="8.500" r="3" fill="#333" stroke="#fff" stroke-width="1.200" /><path d="M7 17.500h8M4 20h14" stroke="#333" stroke-width="1.500" /></svg>
    </footer>

    <footer class="task">
      <svg class="wall" viewBox="0 0 1920 38" width="1920" height="38">
        <path d="M1026 0h506q-8 18-12 38H1036z" fill="#5e0000" /><path d="M1593 38q12-34 50-38 32 10 50 38z" fill="#440000" />
      </svg>
      <span v-for="t in tasks" :key="t[0]" class="tk" :class="t[2]" :style="{ width: t[1] + 'px' }"><svg viewBox="0 0 28 28" v-html="icons[t[0]]" /></span>
      <div class="tray">
        <svg v-for="n in ['tUp', 'tBat', 'tPlane', 'tVol']" :key="n" viewBox="0 0 28 28" v-html="icons[n]" />
        <T class="eng" t="ENG" :w="28" /><T class="time" t="03:22 PM" :w="60" /><svg viewBox="0 0 28 28" v-html="icons.tNote" /><i class="peek" />
      </div>
    </footer>
  </div>
</template>

<style>
body { background: #fff; }
</style>

<style scoped>
.app { width: 1920px; height: 1080px; display: flex; flex-direction: column; font: 12.5px "Noto Sans", "Open Sans", sans-serif; color: #111; background: #f3f3f3; }
.app * { box-sizing: border-box; flex-shrink: 0; }
i, em { font-style: normal; display: block; }
svg { display: block; }
.fit { height: 1.4em; overflow: visible; fill: currentColor; }
.title { height: 26px; background: #fff; display: flex; align-items: center; padding-left: 2px; font-size: 13px; }
.logo { width: 22px; height: 22px; margin-right: 6px; }
.winctl { margin-left: auto; margin-right: 8px; }
.menu { height: 25px; background: #d7d7d7; display: flex; align-items: center; padding-left: 11px; font-size: 12px; letter-spacing: -0.2px; }
.menu-item { white-space: nowrap; line-height: 16px; padding-top: 2px; }
.menu u { text-underline-offset: 2px; }

.bar1 { height: 36px; border-bottom: 1px solid #d3d3d3; display: flex; align-items: center; padding: 1px 0 0 2px; }
.bar2 { height: 53px; border-bottom: 1px solid #d3d3d3; display: flex; align-items: center; padding: 0 0 0 5px; color: #757575; }
.cell { width: 28px; height: 28px; margin: 0 3px 0 2px; }
.cell svg, .mid svg { width: 28px; height: 28px; overflow: visible; }
.cell.on { background: #b3b3b3; }
.cell.box { background: #fff; box-shadow: inset 0 0 0 1px #a9a9a9; }
.sep { width: 8px; height: 28px; background: linear-gradient(#d3d3d3, #d3d3d3) center / 1px 100% no-repeat; }
.bar2 .sep { height: 51px; }
.s12 { width: 12px; }
.s13 { width: 13px; }
.s14 { width: 14px; }
.s15 { width: 15px; }
.drop { width: 20px; display: flex; justify-content: center; padding-right: 6px; }
.down { border: 5px solid transparent; border-top-color: #6d6d6d; border-bottom: 0; display: block; }
.combo { width: 100px; height: 28px; border: 1px solid #adadad; background: #fff; display: flex; align-items: center; justify-content: space-between; margin: 0 3px 0 2px; padding-left: 5px; }
.combo i { width: 22px; height: 26px; background: #ececec; border-left: 1px solid #c9c9c9; display: flex; align-items: center; justify-content: center; }
.launch { margin: 0 15px 0 2px; }
.lab { width: 14px; color: #bdbdbd; display: flex; flex-direction: column; justify-content: space-between; height: 36px; margin-top: 1px; }
.spin { width: 110px; height: 37px; margin-top: 1px; border: 1px solid #c9c9c9; font-size: 12px; }
.spin.second { margin-left: 5px; }
.spin > div { height: 17.5px; display: flex; align-items: center; justify-content: space-between; padding-left: 4px; }
.spin > div + div { border-top: 1px solid #c9c9c9; height: 18px; }
.spin i { width: 31px; height: 100%; border-left: 1px solid #c9c9c9; display: flex; align-items: center; gap: 8px; padding-left: 4px; }
.dn, .up { border: 3.5px solid transparent; display: block; }
.dn { border-top-color: #b3b3b3; border-bottom: 0; }
.up { border-bottom-color: #b3b3b3; border-top: 0; }
.mid { width: 29px; display: flex; justify-content: center; }
.angle { width: 72px; height: 28px; border: 1px solid #c9c9c9; display: flex; align-items: center; justify-content: space-between; padding-left: 4px; font-size: 12px; }
.angle i { width: 22px; height: 26px; border-left: 1px solid #c9c9c9; display: flex; flex-direction: column; align-items: center; justify-content: space-around; }
.apply { width: 99px; height: 28px; border: 1px solid #c9c9c9; display: flex; align-items: center; justify-content: center; color: #c4c4c4; }
.plus { width: 13px; height: 13px; background: linear-gradient(#b0b0b0, #b0b0b0) center / 100% 3px no-repeat, linear-gradient(#b0b0b0, #b0b0b0) center / 3px 100% no-repeat; }
.plus2 { width: 37px; }

.work { height: 860px; display: flex; }
.toolbox { width: 36px; border-right: 1px solid #d0d0d0; padding-top: 2px; display: flex; flex-direction: column; align-items: flex-start; }
.toolbox .cell { margin: 2px 0 3px 4px; }
.hsep { width: 28px; height: 8px; margin-left: 4px; background: linear-gradient(#d3d3d3, #d3d3d3) center / 100% 1px no-repeat; }
.tA { font: 28px/27px "Noto Sans", sans-serif; text-align: center; color: #333; }
.tp { display: flex; align-items: center; justify-content: center; padding-top: 5px; }

.editor { width: 1465px; display: flex; flex-direction: column; }
.tabs { height: 26px; background: #e9e9e9; border-bottom: 1px solid #2f9ec4; box-shadow: inset 0 -1px #b8f0f8; display: flex; gap: 1px; }
.tabs > span { height: 24px; background: #d7d7d7; display: flex; align-items: center; justify-content: center; }
.tab-home { width: 25px; }
.tab-home svg { width: 24px; height: 24px; margin-right: 3px; }
.tabs .tab-doc { width: 117px; background: #cde1ff; padding: 2px 31px 0 0; }
.tab-doc { font-size: 13px; }
.tab-new { width: 25px; }
.viewport { height: 809px; background: #efefef; padding-left: 78px; }
.doc { width: 1309px; height: 809px; background: #fff; }
.docpal { height: 25px; border-top: 1px solid #cdcdcd; display: flex; align-items: center; }
.blk { width: 22px; height: 22px; background: #000; border: 1px solid #555; }
.pr { margin-left: auto; margin-right: 1px; }

.shot { width: 1013px; height: 569px; overflow: hidden; font: 9px "Noto Sans", sans-serif; }
.c-tabs { height: 22px; background: #eb3232; display: flex; align-items: center; padding-left: 5px; }
.c-tab { width: 158px; height: 22px; background: #2f3437; border-radius: 4px 4px 0 0; display: flex; align-items: center; padding-left: 7px; gap: 4px; color: #e4e4e4; margin-right: 6px; }
.c-ctl { margin-left: auto; margin-right: 3px; }
.c-addr { height: 22px; background: #2f3437; display: flex; align-items: center; }
.pill { width: 827px; height: 19px; margin-left: 1px; background: #282c2f; border-radius: 10px; display: flex; align-items: center; font-size: 10px; }
.url { width: 259px; color: #9aa0a4; }
.host { fill: #f0f0f0; }
.star { margin-left: auto; margin-right: 5px; }
.paused { width: 53px; height: 19px; border-radius: 10px; background: #3b4a60; color: #86a9e8; display: flex; align-items: center; justify-content: flex-end; gap: 5px; padding-right: 2px; }
.c-marks { height: 24px; background: #323639; display: flex; align-items: center; padding: 0 0 1px 7px; color: #e6e6e6; }
.mark { display: flex; align-items: center; gap: 3.5px; }
.c-marks span { margin-left: 4px; font-size: 12px; line-height: 14px; }
.c-page { height: 481px; display: flex; background: #000; }
.side { width: 292px; background: #181818; display: flex; flex-direction: column; }
.side-tabs { height: 66px; background: #333; display: flex; font: 13px "Open Sans", sans-serif; }
.toc { width: 146px; border-bottom: 3px solid #ec6a6c; color: #ec6a6c; padding: 21px 0 0 22px; }
.notes { width: 146px; color: #fff; font-weight: 700; padding: 23px 0 0 56px; }
.lessons { height: 395px; padding-top: 15px; color: #8dbb78; font: 600 10.5px "Open Sans", sans-serif; }
.lesson { height: 50.2px; display: flex; align-items: center; padding-left: 23px; }
.lesson.two { height: 57.5px; }
.tile { width: 20px; height: 20px; background: #222; border-radius: 3px; }
.ltext { width: 204px; padding-left: 11px; }
.side-foot { height: 20px; background: #262626; }
.scroll { width: 11px; background: #f0f0f0; display: flex; flex-direction: column; align-items: center; }
.scroll i { width: 0; height: 0; border: 2.5px solid transparent; border-bottom-color: #444; border-top: 0; margin-top: 5px; }
.scroll b { width: 9px; height: 50px; margin-top: 58.5px; background: #c1c1c1; }
.scroll em { border: 2.5px solid transparent; border-top-color: #444; border-bottom: 0; margin-top: auto; margin-bottom: 4px; }
.player { width: 710px; display: flex; flex-direction: column; }
.p-head { height: 66px; background: #242424; display: flex; align-items: center; padding: 0 0 1px 26px; font-family: "Open Sans", sans-serif; }
.p-title { color: #fff; font-size: 13px; font-weight: 700; margin-left: 13px; }
.search { width: 171px; height: 28px; margin-left: 38px; border-radius: 14px; background: #4a484a; color: #a5a5a5; font-size: 11px; display: flex; align-items: center; justify-content: space-between; padding: 0 7px 0 18px; }
.dash { width: 80px; height: 27px; margin-left: 79px; border-radius: 14px; background: linear-gradient(90deg, #f36b9d, #ef8c77); color: #fff; font-size: 11px; display: flex; align-items: center; justify-content: center; }
.ask { color: #e8606a; font-size: 11px; margin-left: 10px; }
.d-title { height: 16px; margin-top: 9px; background: #3a383d; color: #ddd; display: flex; align-items: center; justify-content: space-between; padding-left: 6.5px; font-size: 8.5px; }
.board { height: 382px; display: flex; position: relative; }
.pens { width: 26px; background: #2c2a30; height: 382px; }
.pen { height: 25.3px; }
.pen.cur { background: #222; border-right: 2px solid #4d7f86; }
.ink { font-family: "Open Sans", sans-serif; font-weight: 400; font-style: italic; }
.pg { font-family: "Open Sans", sans-serif; }
.shade { position: absolute; left: 0; top: 300px; width: 710px; height: 82px; background: linear-gradient(rgba(0, 0, 0, 0), rgba(0, 0, 0, 0.08) 45%, rgba(0, 0, 0, 0.42) 78%, rgba(0, 0, 0, 0.62)); display: flex; flex-direction: column; justify-content: flex-end; }
.cb { position: absolute; left: 8px; top: 59px; display: flex; gap: 2px; color: #333; font: 700 7.5px/7px "Open Sans", sans-serif; }
.cb .fit { height: 7px; }
.prog { height: 2px; display: flex; position: relative; margin-bottom: 4px; }
.prog i { width: 115px; background: #2a96e8; }
.prog b { width: 262px; background: rgba(255, 255, 255, 0.55); }
.ctl { height: 12px; display: flex; align-items: center; color: #eee; padding-left: 2px; position: relative; top: 2px; font-size: 9px; }
.ctl .r { margin-left: auto; }
.c-task { height: 20px; background: linear-gradient(100deg, #652400 54.5%, #5e0000 54.6% 80%, #652400 80.2%); display: flex; }
.c-task > span { width: 24.4px; height: 20px; display: flex; justify-content: center; align-items: center; }
.c-task > span svg { width: 14px; height: 14px; margin-right: 2px; }
.c-task .act { background: #952a1a; }
.c-task .u { background: linear-gradient(#f5b5ac, #f5b5ac) bottom / 19px 1px no-repeat; }
.c-tray { margin-left: auto; width: 162px; display: flex; align-items: center; color: #fff; background: radial-gradient(circle at 25px 22px, #440000 22px, transparent 23px); }
.c-tray svg:not(.fit) { width: 13px; height: 13px; margin-right: 3px; }
.en { margin-left: 2px; }
.clk { margin-left: 9px; }
.c-tray .nt { margin-left: 12px; }

.split { width: 5px; background: linear-gradient(90deg, #fff 2px, #cfcfcf 2px 3px, #fff 3px); }
.docker { width: 389px; display: flex; flex-direction: column; }
.d-head { height: 28px; background: #e9e9e9; border-bottom: 1px solid #a9a9a9; display: flex; align-items: center; justify-content: space-between; padding: 1px 0 0 6px; }
.d-body { height: 832px; display: flex; }
.hints { width: 363px; background: #fff; }
.h-page { height: 798px; padding: 17px 9px 0 9px; font-size: 13.5px; }
.h1 { font-size: 18px; font-weight: 700; margin-bottom: 12px; }
.p { height: 21px; }
ul { list-style: none; margin: 2px 0 0; padding: 0; color: #3e8fd6; }
li { height: 28px; display: flex; align-items: center; }
li i { width: 3px; height: 3px; border-radius: 2px; background: #111; margin: 1px 6.5px 0 1px; }
hr { border: 0; border-top: 1px solid #999; margin: 15px 0 20px; }
.h2 { font-size: 17.5px; font-weight: 700; }
.topic { display: flex; margin-top: 10px; padding-left: 7px; gap: 13px; }
.ht { font-size: 14.5px; font-weight: 700; margin: 3px 0 4px; }
.lk { color: #3e8fd6; }
.h-foot { height: 34px; background: #f3f3f3; display: flex; align-items: center; justify-content: space-between; padding: 4px 5px 0 3px; }
.vtabs { width: 26px; background: #e9e9e9; border-left: 1px solid #bdbdbd; display: flex; flex-direction: column; align-items: center; }
.vt { width: 26px; display: flex; flex-direction: column; align-items: flex-start; }
.vt span { writing-mode: vertical-rl; font-size: 12px; line-height: 22px; margin-top: 3px; }
.vt.on { height: 86px; background: #adadad; }
.vt.ob { height: 107px; background: #d7d7d7; padding-top: 3px; border-top: 1px solid #f3f3f3; }
.vtabs > .plus { margin-top: 8px; }
.pal { width: 25px; border-left: 1px solid #dcdcdc; }
.sw { width: 22px; margin-left: 1px; background: #555; padding: 1px 1px 0; }
.sw i { height: 20px; margin-bottom: 1px; }

.status { height: 42px; border-top: 1px solid #cdcdcd; display: flex; align-items: center; padding: 1px 10px 0 7px; font-size: 13px; }
.sg { width: 28px; height: 28px; overflow: visible; margin-right: 5px; }
.click { margin-left: 32px; }
.mon { margin-left: auto; }
.task { height: 38px; background: #652400; display: flex; position: relative; }
.wall { position: absolute; left: 0; top: 0; }
.tk { height: 38px; display: flex; justify-content: center; align-items: center; position: relative; }
.tk svg { width: 28px; height: 28px; margin-right: 1px; }
.tk.u { background: linear-gradient(#ffb3ab, #ffb3ab) bottom / 35px 3px no-repeat; }
.tk.act { background: linear-gradient(#ffb3ab, #ffb3ab) bottom / 100% 3px no-repeat, #952a1a; }
.tray { margin-left: auto; display: flex; align-items: center; color: #fff; font-size: 14px; position: relative; }
.tray svg:not(.fit) { width: 28px; height: 28px; margin-right: 2px; }
.eng { margin: 0 17px 0 8px; }
.time { margin-right: 20px; }
.peek { width: 1px; height: 38px; background: #9b7a66; margin: 0 5px 0 19px; }
</style>
